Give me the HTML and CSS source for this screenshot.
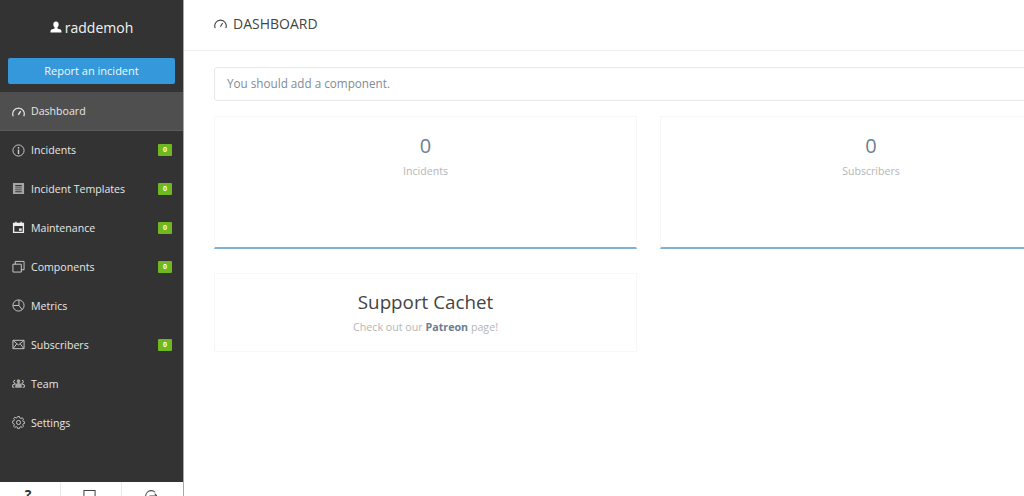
FILE: index.html
```html
<!DOCTYPE html>
<html lang="en">
<head>
    <meta charset="UTF-8">
    <title>Dashboard</title>
    <link rel="stylesheet" href="styles.css">
</head>
<body>
    <div class="sidebar">
        <div class="profile">
            <svg class="user-icon" viewBox="0 0 12 12"><path d="M6 0.500c1.700 0 2.700 1.200 2.700 3 0 1.200-.6 2.300-1.300 2.900v1l3 1.200c.9.400 1.100 1 1.100 2.900H.5c0-1.900.2-2.500 1.100-2.900l3-1.200v-1C3.900 5.800 3.300 4.700 3.300 3.500c0-1.800 1-3 2.700-3z"/></svg>
            <span>raddemoh</span>
        </div>
        <div class="report-wrap"><a class="report-btn">Report an incident</a></div>
        <ul class="nav">
            <li class="active">
                <svg class="nav-icon gauge" viewBox="0 0 14 14"><path d="M1.300 12A6.200 6.200 0 1 1 12.700 12"/><path d="M6.800 10.500L9.400 6.500" class="thick"/></svg>
                <span class="label">Dashboard</span>
            </li>
            <li class="second">
                <svg class="nav-icon" viewBox="0 0 14 14"><circle cx="7" cy="7" r="6"/><path d="M7 6V10.800M7 3.200V4.800" class="thick"/></svg>
                <span class="label">Incidents</span><span class="badge">0</span>
            </li>
            <li>
                <svg class="nav-icon" viewBox="0 0 14 14"><path class="solid" d="M1 1H13V13H1zM3.500 3.300V4.500H10.500V3.300zM3.500 5.800V6.800H10.500V5.800zM3.500 8V9H10.500V8zM3.500 10V11H10.500V10z"/></svg>
                <span class="label">Incident Templates</span><span class="badge">0</span>
            </li>
            <li>
                <svg class="nav-icon" viewBox="0 0 14 14"><path class="solid bright" d="M1 2h2.500V.8h1.500V2h4V.8h1.500V2H13v11H1zM2.500 5.500v6h9v-6zM7.500 8h3v2.500h-3z"/></svg>
                <span class="label">Maintenance</span><span class="badge">0</span>
            </li>
            <li>
                <svg class="nav-icon" viewBox="0 0 14 14"><path d="M1 4.500H10V13H1zM3.500 4.500V1.500H13V10.500H10"/></svg>
                <span class="label">Components</span><span class="badge">0</span>
            </li>
            <li>
                <svg class="nav-icon" viewBox="0 0 14 14"><circle cx="7" cy="7" r="6"/><path d="M7.500 1V7H1.500M7.500 7L11 11.500"/></svg>
                <span class="label">Metrics</span>
            </li>
            <li>
                <svg class="nav-icon" viewBox="0 0 14 14"><path d="M1 2.500H13V11.500H1zM1.500 3L7 7.500L12.500 3M1.500 11L5 6.500M12.500 11L9 6.500"/></svg>
                <span class="label">Subscribers</span><span class="badge">0</span>
            </li>
            <li>
                <svg class="nav-icon" viewBox="0 0 14 14"><path class="solid" d="M7 2.500a2 2 0 0 1 2 2 2 2 0 0 1-1 1.700v.6l2.500 1V11.500h-7V7.800l2.500-1v-.6a2 2 0 0 1-1-1.700 2 2 0 0 1 2-2z"/><path d="M3.300 3.500a1.500 1.500 0 0 0 0 3.200V7.500L.7 8.500V11H2.500M10.700 3.500a1.500 1.500 0 0 1 0 3.200V7.500L13.300 8.500V11H11.500"/></svg>
                <span class="label">Team</span>
            </li>
            <li>
                <svg class="nav-icon" viewBox="0 0 14 14"><circle cx="7" cy="7" r="2.200"/><path d="M6 .8h2l.4 1.700 1.300.6 1.500-.9 1.400 1.400-.9 1.500.6 1.300 1.700.4v1.800l-1.700.4-.6 1.300.9 1.500-1.400 1.400-1.500-.9-1.300.6-.4 1.700H6l-.4-1.700-1.300-.6-1.500.9-1.400-1.400.9-1.500-.6-1.300L0 8V6.200l1.700-.4.6-1.300-.9-1.500 1.400-1.400 1.500.9 1.300-.6z" transform="translate(.4 -.2) scale(.95)"/></svg>
                <span class="label">Settings</span>
            </li>
        </ul>
        <div class="side-footer">
            <div class="foot-cell"><span class="help">?</span></div>
            <div class="foot-cell"><svg class="foot-icon" viewBox="0 0 14 14"><path d="M1 1.500H13V13H1z"/></svg></div>
            <div class="foot-cell"><svg class="foot-icon" viewBox="0 0 14 14"><path d="M12 3.500A6 6 0 1 0 12 12M6 7.500H14M11.500 5L14 7.500L11.500 10"/></svg></div>
        </div>
    </div>

    <div class="main">
        <div class="page-header">
            <svg class="header-icon" viewBox="0 0 14 14"><path d="M1.300 12A6.200 6.200 0 1 1 12.700 12"/><path d="M6.800 10.500L9.400 6.500"/></svg>
            <span>DASHBOARD</span>
        </div>
        <div class="content">
            <div class="alert">You should add a component.</div>
            <div class="cards">
                <div class="card stat">
                    <div class="stat-num">0</div>
                    <div class="stat-label">Incidents</div>
                </div>
                <div class="card stat">
                    <div class="stat-num">0</div>
                    <div class="stat-label">Subscribers</div>
                </div>
                <div class="card support">
                    <h3>Support Cachet</h3>
                    <p>Check out our <a>Patreon</a> page!</p>
                </div>
            </div>
        </div>
    </div>
</body>
</html>
```

FILE: styles.css
```css
html, body {
    height: 100%;
}
body {
    margin: 0;
    display: flex;
    overflow: hidden;
    font-family: "Open Sans", sans-serif;
    background-color: #fff;
    color: #333;
}
.sidebar {
    flex: 0 0 183px;
    height: 496px;
    display: flex;
    flex-direction: column;
    background-color: #333;
    border-right: 1px solid #a8a8a8;
    color: #eee;
}
.profile {
    height: 54px;
    margin-bottom: 4px;
    display: flex;
    justify-content: center;
    align-items: center;
    gap: 3px;
    font-size: 14px;
    color: #f2f2f2;
}
.user-icon {
    width: 12px;
    height: 12px;
    fill: #fff;
}
.report-wrap {
    padding: 0 8px;
    height: 34px;
}
.report-btn {
    display: block;
    height: 26px;
    line-height: 26px;
    text-align: center;
    font-size: 11px;
    color: #f2f8fd;
    background-color: #3498db;
    border-radius: 2px;
}
.nav {
    list-style: none;
    margin: 0;
    padding: 0;
    flex: 1;
}
.nav li {
    height: 39px;
    display: flex;
    align-items: center;
    padding: 0 12px 2px 12px;
    box-sizing: border-box;
    font-size: 10.600px;
    color: #e6e6e6;
}
.nav li.active {
    padding-bottom: 0;
    background-color: #4f4f4f;
    border-bottom: 1px solid #5c5c5c;
}
.nav li.second {
    padding-bottom: 1px;
}
.nav-icon {
    width: 13px;
    height: 13px;
    margin-right: 6px;
    fill: none;
    stroke: #cfcfcf;
    stroke-width: 1;
}
.nav-icon.gauge {
    stroke: #e4e4e4;
    stroke-width: 1.300;
}
.nav-icon .thick {
    stroke-width: 1.500;
}
.nav-icon .solid {
    fill: #a6a6a6;
    fill-rule: evenodd;
    stroke: none;
}
.nav-icon .bright {
    fill: #eee;
}
.label {
    flex: 1;
}
.badge {
    width: 14px;
    height: 12px;
    margin-right: -1px;
    line-height: 12px;
    text-align: center;
    font-size: 7px;
    font-weight: 700;
    color: #fff;
    background-color: #6fb81f;
    border-radius: 1px;
}
.side-footer {
    height: 14px;
    display: flex;
    background-color: #fff;
    overflow: hidden;
}
.foot-cell {
    box-sizing: border-box;
    width: 61px;
    display: flex;
    justify-content: center;
    padding: 7px 4px 0 0;
    border-right: 1px solid #e8e8e8;
}
.foot-cell:last-child {
    border-right: none;
}
.help {
    font-size: 14px;
    line-height: 12px;
    font-weight: 700;
    color: #333;
}
.foot-icon {
    width: 13px;
    height: 13px;
    fill: none;
    stroke: #444;
    stroke-width: 1.100;
}
.main {
    flex: 0 0 916px;
}
.page-header {
    box-sizing: border-box;
    height: 51px;
    display: flex;
    align-items: center;
    gap: 6px;
    padding: 0 0 4px 30px;
    border-bottom: 1px solid #f0f0f0;
    font-size: 14px;
    color: #444;
}
.header-icon {
    width: 13px;
    height: 13px;
    fill: none;
    stroke: #444;
    stroke-width: 1.200;
}
.content {
    padding: 16px 18px 0 30px;
}
.alert {
    height: 32px;
    line-height: 31px;
    padding-left: 12px;
    border: 1px solid #e8e8e8;
    border-radius: 3px;
    font-size: 11.700px;
    color: #7f8b98;
}
.cards {
    margin-top: 15px;
    display: grid;
    grid-template-columns: 423px 422px;
    column-gap: 23px;
    row-gap: 24px;
}
.card {
    box-sizing: border-box;
    border: 1px solid #f7f7f7;
    text-align: center;
}
.stat {
    height: 133px;
    padding-top: 15px;
    border-bottom: 2px solid #7fb2d6;
}
.stat-num {
    font-size: 20px;
    line-height: 28px;
    color: #6f7f8f;
}
.stat-label {
    margin-top: 4px;
    font-size: 10.600px;
    color: #b5b5b5;
}
.support {
    height: 79px;
    padding-top: 14px;
}
.support h3 {
    margin: 0;
    font-size: 18.800px;
    line-height: 28px;
    font-weight: 400;
    color: #444;
}
.support p {
    margin: 4px 0 0;
    font-size: 10.700px;
    color: #b5b5b5;
}
.support a {
    font-weight: 700;
    color: #6b7d8e;
}
```
